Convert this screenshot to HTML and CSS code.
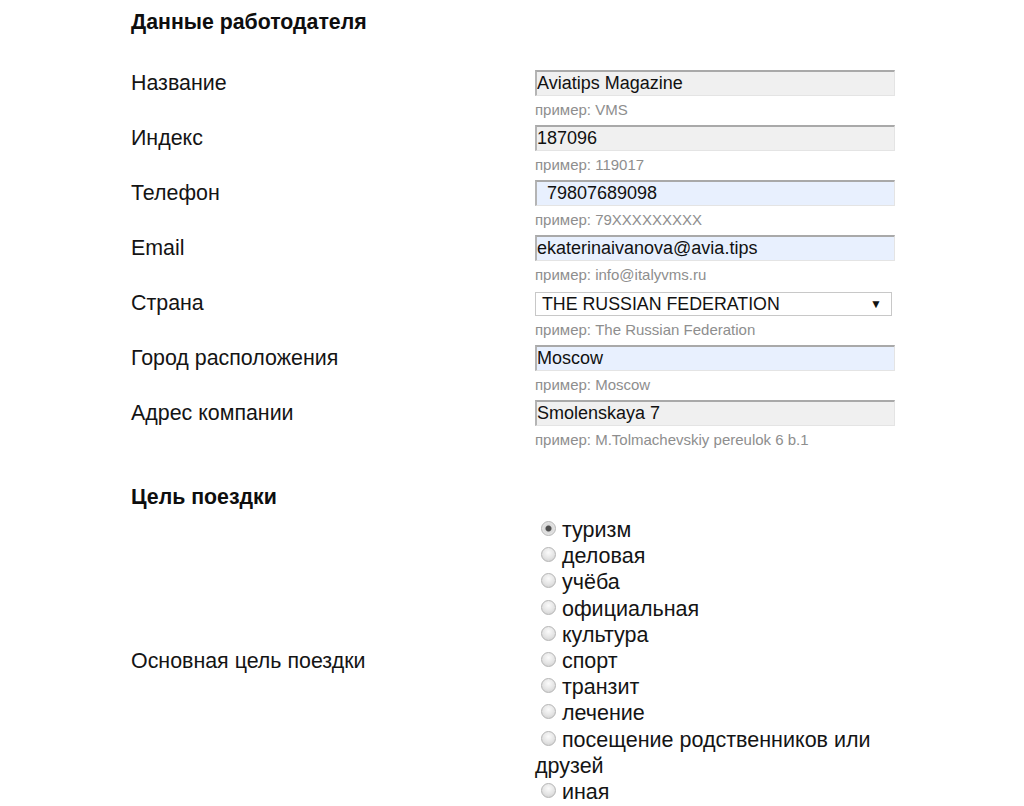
FILE: index.html
```html
<!DOCTYPE html>
<html lang="ru">
<head>
<meta charset="utf-8">
<title>Данные работодателя</title>
<link rel="stylesheet" href="styles.css">
</head>
<body>
<div class="page">
  <h2 class="section-title first">Данные работодателя</h2>

  <div class="row">
    <div class="label">Название</div>
    <div class="field">
      <input class="inp gray" type="text" value="Aviatips Magazine">
      <div class="hint">пример: VMS</div>
    </div>
  </div>

  <div class="row">
    <div class="label">Индекс</div>
    <div class="field">
      <input class="inp gray" type="text" value="187096">
      <div class="hint">пример: 119017</div>
    </div>
  </div>

  <div class="row">
    <div class="label">Телефон</div>
    <div class="field">
      <input class="inp blue indent" type="text" value="79807689098">
      <div class="hint">пример: 79XXXXXXXXX</div>
    </div>
  </div>

  <div class="row">
    <div class="label">Email</div>
    <div class="field">
      <input class="inp blue" type="text" value="ekaterinaivanova@avia.tips">
      <div class="hint">пример: info@italyvms.ru</div>
    </div>
  </div>

  <div class="row">
    <div class="label">Страна</div>
    <div class="field">
      <div class="select"><span>THE RUSSIAN FEDERATION</span><span class="arrow">▼</span></div>
      <div class="hint">пример: The Russian Federation</div>
    </div>
  </div>

  <div class="row">
    <div class="label">Город расположения</div>
    <div class="field">
      <input class="inp blue" type="text" value="Moscow">
      <div class="hint">пример: Moscow</div>
    </div>
  </div>

  <div class="row">
    <div class="label">Адрес компании</div>
    <div class="field">
      <input class="inp gray" type="text" value="Smolenskaya 7">
      <div class="hint">пример: M.Tolmachevskiy pereulok 6 b.1</div>
    </div>
  </div>

  <h2 class="section-title second">Цель поездки</h2>

  <div class="row radio-row">
    <div class="label">Основная цель поездки</div>
    <div class="radios">
      <label><input type="radio" name="goal" checked> туризм</label><br>
      <label><input type="radio" name="goal"> деловая</label><br>
      <label><input type="radio" name="goal"> учёба</label><br>
      <label><input type="radio" name="goal"> официальная</label><br>
      <label><input type="radio" name="goal"> культура</label><br>
      <label><input type="radio" name="goal"> спорт</label><br>
      <label><input type="radio" name="goal"> транзит</label><br>
      <label><input type="radio" name="goal"> лечение</label><br>
      <label><input type="radio" name="goal"> посещение родственников или друзей</label><br>
      <label><input type="radio" name="goal"> иная</label>
    </div>
  </div>
</div>
</body>
</html>
```

FILE: styles.css
```css
html, body {
  margin: 0;
  padding: 0;
  background: #ffffff;
}

body {
  font-family: "Liberation Sans", Arial, sans-serif;
  color: #141414;
}

.page {
  padding-left: 131px;
}

.section-title {
  font-size: 21.3px;
  line-height: 24px;
  font-weight: bold;
  margin: 0;
  color: #0e0e0e;
}

.section-title.first {
  padding-top: 10px;
  margin-bottom: 36px;
}

.section-title.second {
  margin-top: 30px;
  margin-bottom: 8px;
}

.row {
  display: grid;
  grid-template-columns: 404px 360px;
  align-items: start;
}

.label {
  font-size: 21.4px;
  line-height: 26px;
}

.field {
  padding-bottom: 7px;
}

.inp {
  display: block;
  box-sizing: border-box;
  width: 360px;
  height: 26px;
  margin: 0;
  padding: 0 1px 0 0;
  font-family: "Liberation Sans", Arial, sans-serif;
  font-size: 18px;
  color: #111;
  border-style: solid;
  border-width: 2px 1px 1px 2px;
  border-color: #a9a9a9 #e4e4e4 #e4e4e4 #b4b4b4;
  outline: none;
}

.inp.gray {
  background: #f0f0f0;
}

.inp.blue {
  background: #e8f0fe;
}

.inp.indent {
  padding-left: 10px;
}

.select {
  box-sizing: border-box;
  width: 357px;
  height: 24px;
  margin-top: 2px;
  border: 1px solid #c8c8c8;
  background: #ffffff;
  display: flex;
  align-items: center;
  justify-content: space-between;
  padding: 0 9px 0 6px;
  font-size: 17.8px;
  color: #111;
}

.select .arrow {
  font-size: 12px;
  color: #111;
}

.hint {
  margin-top: 6px;
  font-size: 15px;
  line-height: 16px;
  color: #8e8e8e;
}

.radio-row {
  align-items: center;
}

.radios {
  font-size: 21.5px;
  line-height: 26.2px;
  width: 360px;
}

.radios label {
  cursor: pointer;
}

.radios input[type="radio"] {
  -webkit-appearance: none;
  appearance: none;
  width: 15px;
  height: 15px;
  margin: 0 0 0 6px;
  border: 1px solid #b5b5b5;
  border-radius: 50%;
  background: radial-gradient(circle at 50% 35%, #fbfbfb 0%, #e4e4e4 55%, #c9c9c9 100%);
  box-sizing: border-box;
  vertical-align: 1px;
}

.radios input[type="radio"]:checked {
  background: radial-gradient(circle, #4d4d4d 0, #4d4d4d 2.5px, #d8d8d8 3.5px, #f0f0f0 100%);
}
```
